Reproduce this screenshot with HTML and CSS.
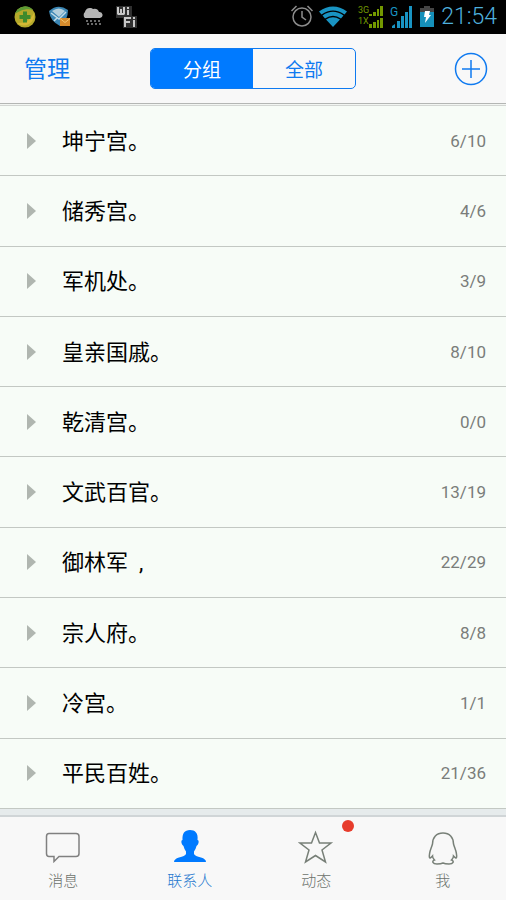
FILE: index.html
```html
<!DOCTYPE html>
<html lang="zh-CN">
<head>
<meta charset="utf-8">
<meta name="viewport" content="width=device-width, initial-scale=1">
<title>联系人</title>
<link rel="stylesheet" href="styles.css">
</head>
<body>
<div class="status">
  <div class="status-left">
    <svg width="22" height="22" viewBox="0 0 22 22" aria-hidden="true"><circle cx="11" cy="11" r="10.500" fill="#b5a92b"/><path d="M1 8A10.500 10.500 0 0 1 19 4C12 2 5 5 1 8Z" fill="#5c9a35"/><path d="M3 17Q15 18 20 7A10.500 10.500 0 0 1 3 17Z" fill="#d5b935"/><path d="M9 5.500h4v3.500H16.500v4h-3.500V16.500h-4v-3.500H5.500v-4h3.500Z" fill="#3f8a2c"/></svg>
    <svg width="22" height="22" viewBox="0 0 22 22" aria-hidden="true"><path d="M1 5Q10-3 20 4Q20 14 12 20Q2 15 1 5Z" fill="#3b86b4"/><path d="M4 5Q11 0 17 5L11 11Z" fill="#b4cfdc"/><path d="M3 7l8 6 7-7M6 15l3-3" fill="none" stroke="#c4dce6" stroke-width="1.500"/><path d="M12 12h10v8H12Z" fill="#d68b2c"/><path d="M12 12.500l5 4 5-4" fill="none" stroke="#f0c36d"/></svg>
    <svg width="22" height="22" viewBox="0 0 22 22" aria-hidden="true"><path d="M3 12a4 4 0 0 1 0-6 5 5 0 0 1 8-3 5 5 0 0 1 6 3 3 3 0 0 1 1 6Z" fill="#b5b5b5"/><path d="M4 15h2m2 0h2m2 0h2m2 0h2M5 18h2m2 0h2m2 0h2m2 0h2" stroke="#8d8d8d" stroke-width="1.500"/></svg>
    <svg width="22" height="22" viewBox="0 0 22 22" aria-hidden="true"><path d="M0 0h16v10h5v12H7V12H0Z" fill="#303030"/><path d="M1 1h2v6h1V3h2v4h1V1h2v7l-1 1H2L1 8ZM11 1h2v2h-2ZM11 4h2v5h-2ZM8 11h7v2h-5v2h4v2h-4v4H8ZM17 11h2v2h-2ZM17 14h2v7h-2Z" fill="#c8c8c8"/></svg>
  </div>
  <div class="status-right">
    <svg width="24" height="24" viewBox="0 0 24 24" aria-hidden="true"><g fill="none" stroke="#8c8c8c" stroke-width="1.500"><circle cx="13" cy="12" r="9"/><path d="M13 6v6l4 3M2.500 6l5-5M23.500 6l-5-5"/></g></svg>
    <svg width="28" height="24" viewBox="0 0 28 24" aria-hidden="true"><path d="M0 6.500Q14-3.500 28 6.500L25.500 9.500Q14 1.500 2.500 9.500ZM3.500 10.500Q14 3 24.500 10.500L22 13.500Q14 8 6 13.500ZM7 14.500Q14 10 21 14.500L14 22Z" fill="#1994c3"/></svg>
    <svg class="dual-signal" width="26" height="26" viewBox="0 0 26 26" aria-hidden="true"><path d="M12 12v-2h3v2zM16 12V8h3v4zM20 12V5h2v7zM23 12V2h3v10zM12 24v-4h3v4zM16 24v-6h3v6zM20 24v-8h2v8zM23 24V14h3v10z" fill="#739800"/><text class="signal-text" x="1" y="9">3G</text><text class="signal-text" x="1" y="20">1X</text></svg>
    <svg width="24" height="26" viewBox="0 0 24 26" aria-hidden="true"><path d="M3 24v-2l3-2v4zM8 24v-7h3v7zM12 24V12h3v12zM16 24V8h3v16zM20 24V2h3v22z" fill="#1994c3"/><text class="network-text" x="1" y="12">G</text></svg>
    <svg width="16" height="22" viewBox="0 0 16 22" aria-hidden="true"><path d="M1 2h4V0h6v2h4v5H1Z" fill="#454545"/><path d="M1 6h14v15H1Z" fill="#1590ba"/><path d="M6 5h5l-1 4h2l-6 8 1-6H5Z" fill="#fff"/></svg>
    <time class="clock">21:54</time>
  </div>
</div>

<header class="nav">
  <div class="nav-side"><button class="manage" type="button">管理</button></div>
  <div class="segments">
    <button class="segment segment-on" type="button" aria-pressed="true">分组</button>
    <button class="segment" type="button" aria-pressed="false">全部</button>
  </div>
  <div class="nav-side nav-end">
    <button class="add" type="button" aria-label="添加"><svg width="34" height="34" viewBox="0 0 34 34" aria-hidden="true"><g fill="none" stroke="#0f7af0" stroke-width="1.500"><circle cx="17" cy="17" r="15.500"/><path d="M8 17h18M17 8v18"/></g></svg></button>
  </div>
</header>

<main class="groups">
  <button class="group" type="button"><span class="arrow"></span><span class="name">坤宁宫。</span><span class="count">6/10</span></button>
  <button class="group" type="button"><span class="arrow"></span><span class="name">储秀宫。</span><span class="count">4/6</span></button>
  <button class="group" type="button"><span class="arrow"></span><span class="name">军机处。</span><span class="count">3/9</span></button>
  <button class="group" type="button"><span class="arrow"></span><span class="name">皇亲国戚。</span><span class="count">8/10</span></button>
  <button class="group" type="button"><span class="arrow"></span><span class="name">乾清宫。</span><span class="count">0/0</span></button>
  <button class="group" type="button"><span class="arrow"></span><span class="name">文武百官。</span><span class="count">13/19</span></button>
  <button class="group" type="button"><span class="arrow"></span><span class="name">御林军&nbsp; ,</span><span class="count">22/29</span></button>
  <button class="group" type="button"><span class="arrow"></span><span class="name">宗人府。</span><span class="count">8/8</span></button>
  <button class="group" type="button"><span class="arrow"></span><span class="name">冷宫。</span><span class="count">1/1</span></button>
  <button class="group" type="button"><span class="arrow"></span><span class="name">平民百姓。</span><span class="count">21/36</span></button>
</main>

<nav class="tabs">
  <a class="tab" href="#messages"><svg width="36" height="36" viewBox="0 0 36 36" aria-hidden="true"><path d="M4 3.500h27q3 0 3 3v17q0 3-3 3H14l-5 5v-5H4q-2.500 0-2.500-3v-17q0-3 2.500-3Z" fill="none" stroke="#808080" stroke-width="1.500"/></svg>消息</a>
  <a class="tab tab-on" href="#contacts"><svg width="36" height="36" viewBox="0 0 36 36" aria-hidden="true"><path d="M18 0C12.500 0 10 3.500 10.500 10Q9 10 9.500 13Q10 15 11.500 16Q12.500 20 14 21.500V24Q13 26 7 27.500Q2 29 2 32H34Q34 29 29 27.500Q23 26 22 24V21.500Q23.500 20 24.500 16Q26 15 26.500 13Q27 10 25.500 10C26.500 3 23 0 18 0Z" fill="#007aff"/></svg>联系人</a>
  <a class="tab" href="#updates"><svg width="36" height="36" viewBox="0 0 36 36" aria-hidden="true"><path d="M17.500 2.500L21.500 13H33L24 20L27.500 32L17.500 25.500L7.500 32L11 20L2 13H13.500Z" fill="none" stroke="#788078" stroke-width="1.500"/></svg>动态<span class="dot"></span></a>
  <a class="tab" href="#me"><svg width="36" height="36" viewBox="0 0 36 36" aria-hidden="true"><path d="M18 3C11.500 3 7.500 7.500 7.500 14C6.500 18 3.500 23 4.500 27.500Q5 29 7.500 26Q7.500 28 9.500 30C6.500 31 7.500 34 12 34Q16 34 18 33Q20 34 24 34C28.500 34 29.500 31 26.500 30Q28.500 28 28.500 26Q31 29 31.500 27.500C32.500 23 29.500 18 28.500 14C28.500 7.500 24.500 3 18 3Z" fill="none" stroke="#788078" stroke-width="1.500"/></svg>我</a>
</nav>
</body>
</html>
```
FILE: styles.css
```css
* { box-sizing: border-box; }

body {
  margin: 0;
  min-height: 100vh;
  display: flex;
  flex-direction: column;
  background: #f7fcf7;
  font-family: Roboto, "Noto Sans CJK SC", sans-serif;
}

button {
  margin: 0;
  padding: 0;
  border: 0;
  background: none;
  font: inherit;
  color: inherit;
}

svg { display: block; flex: none; }

.status {
  display: flex;
  justify-content: space-between;
  align-items: center;
  height: 34px;
  padding: 0 9px 0 14px;
  background: #000;
}

.status-left { display: flex; gap: 12px; }

.status-right { display: flex; align-items: center; gap: 6px; }

.dual-signal { margin-left: 4px; }

.signal-text { fill: #739800; font-size: 9px; }

.network-text { fill: #1994c3; font-size: 12px; }

.clock {
  color: #4fb0dd;
  font-size: 23px;
  font-weight: 300;
  line-height: 34px;
}

.nav {
  display: flex;
  align-items: center;
  height: 72px;
  padding: 0 18px 2px;
  background: #f8f8f8;
  border-bottom: 1px solid #d3d6d3;
  box-shadow: inset 0 -1px #f2f5f2, inset 0 -2px #b4b6b4;
}

.nav-side { flex: 1; display: flex; }

.nav-end { justify-content: flex-end; }

.manage {
  padding: 0 6px 4px;
  color: #0f7af0;
  font-size: 23px;
}

.segments {
  display: flex;
  width: 206px;
  height: 41px;
  border: 1px solid #0f7af0;
  border-radius: 5px;
  overflow: hidden;
}

.segment { flex: 1; color: #0f7af0; font-size: 19px; }

.segment-on { background: #007aff; color: #fff; }

.groups { flex: 1; display: flex; flex-direction: column; }

.group {
  flex: 1 0 60px;
  display: flex;
  align-items: center;
  padding: 0 20px 0 27px;
  border-bottom: 1px solid #c3c8c3;
  text-align: left;
}

.arrow {
  border: 8px solid transparent;
  border-left: 9px solid #b0b6b0;
  border-right: 0;
}

.name {
  flex: 1;
  padding: 0 0 4px 26px;
  color: #000;
  font-size: 22px;
}

.count { color: #7a7d7a; font-size: 17px; }

.tabs {
  display: flex;
  height: 91px;
  border-top: 6px solid #e6ebec;
  background: #f8f8f8;
  box-shadow: inset 0 2px #d0d5d7;
}

.tab {
  flex: 1;
  position: relative;
  display: flex;
  flex-direction: column;
  align-items: center;
  gap: 4px;
  padding-top: 15px;
  color: #6c726c;
  font-size: 15px;
  font-weight: 300;
  line-height: 22px;
  text-decoration: none;
}

.tab-on { color: #1f78cf; }

.dot {
  position: absolute;
  top: 5px;
  left: calc(50% + 26px);
  width: 12px;
  height: 12px;
  border-radius: 50%;
  background: #e73c2c;
}
```
